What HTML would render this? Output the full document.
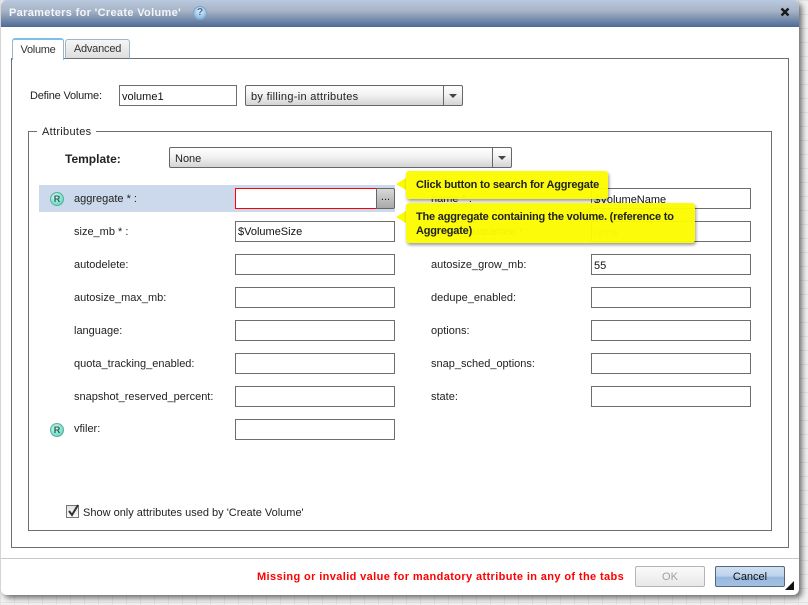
<!DOCTYPE html>
<html><head><meta charset="utf-8">
<style>
html,body{margin:0;padding:0}
body{width:808px;height:605px;overflow:hidden;position:relative;background-color:#f1f1f1;
background-image:linear-gradient(#e3e3e3 1px,transparent 1px),linear-gradient(90deg,#e3e3e3 1px,transparent 1px);background-size:14px 14px;
font-family:"Liberation Sans",sans-serif;font-size:11px;color:#222}
div{position:absolute;box-sizing:border-box}
.t{white-space:nowrap;line-height:14px;margin-top:1px}
.i{width:160px;height:21px;background:#fff;border:1px solid #6e6e6e;padding:4px 2px 0;line-height:14px;font-size:11px;color:#111;white-space:nowrap}
.sel{height:21px;border:1px solid #666;border-radius:2px;background:linear-gradient(#fff,#f2f2f2 45%,#d4d4d4);padding:4px 5px 0;line-height:14px;white-space:nowrap}
.ar{top:0;right:0;width:19px;height:19px;border-left:1px solid #666}
.ar:after{content:"";position:absolute;left:5px;top:8px;border:4px solid transparent;border-top:4px solid #444;border-bottom:0}
.r{width:14px;height:14px;border-radius:50%;background:radial-gradient(circle at 40% 35%,#d9fbf3,#6fdcc6 70%,#44b9a5);border:1px solid #5cae9f;color:#2a6158;font:bold 9px/12px "Liberation Sans",sans-serif;text-align:center}
.tip{background:rgba(251,251,0,.96);border-radius:3px;box-shadow:1px 2px 3px rgba(0,0,0,.4);font-weight:bold;color:#222;line-height:14px;padding:0 10px;letter-spacing:-.2px}
.tipa{width:0;height:0;border-style:solid;border-color:transparent #fbfb00 transparent transparent;border-width:6px 10px 6px 0}
</style></head><body>
<div style="left:1px;top:0;width:798px;height:595px;background:#fff;border-radius:6px;box-shadow:3px 3px 6px rgba(0,0,0,.55)"></div>
<div style="left:1px;top:0;width:798px;height:27px;border-radius:6px 6px 0 0;background:linear-gradient(#b9c9df,#a8b4c6 40%,#4c6a97)"></div>
<div class="t" style="left:9px;top:5px;color:#f2f5fa;font-weight:bold;font-size:11px;letter-spacing:.33px">Parameters for 'Create Volume'</div>
<div style="left:193px;top:6px;width:14px;height:14px;border-radius:50%;background:radial-gradient(circle at 50% 35%,#e8f2fb,#80b3de 80%);border:1px solid #7fa4c6;color:#3f6f9a;font:bold 10px/12px 'Liberation Sans',sans-serif;text-align:center">?</div>
<svg style="position:absolute;left:780px;top:7px" width="10" height="10"><path d="M1.5 1.5L8.5 8.5M8.5 1.5L1.5 8.5" stroke="#1a1a1a" stroke-width="2.4"/></svg>

<div style="left:11px;top:58px;width:778px;height:490px;border:1px solid #6e6e6e"></div>
<div style="left:65px;top:39px;width:65px;height:20px;background:linear-gradient(#f6f6f6,#dedede);border:1px solid #9fb6c9;border-bottom:1px solid #6e6e6e;border-radius:3px 3px 0 0;text-align:center;line-height:18px;color:#333;letter-spacing:-.2px">Advanced</div>
<div style="left:12px;top:38px;width:52px;height:22px;background:#fff;border:1px solid #9fb6c9;border-top:2px solid #7cc0e8;border-bottom:0;border-radius:3px 3px 0 0;text-align:center;line-height:21px;color:#333;letter-spacing:-.3px">Volume</div>

<div class="t" style="left:30px;top:88px;letter-spacing:-.2px">Define Volume:</div>
<div class="i" style="left:119px;top:85px;width:118px">volume1</div>
<div class="sel" style="left:245px;top:85px;width:218px;letter-spacing:.3px">by filling-in attributes<div class="ar"></div></div>

<div style="left:28px;top:131px;width:744px;height:400px;border:1px solid #6e6e6e"></div>
<div class="t" style="left:37px;top:124px;background:#fff;padding:0 5px;letter-spacing:.3px">Attributes</div>
<div class="t" style="left:65px;top:151px;font-weight:bold;font-size:12px">Template:</div>
<div class="sel" style="left:169px;top:147px;width:343px">None<div class="ar"></div></div>

<div style="left:39px;top:185px;width:356px;height:27px;background:#ccd9ec"></div>
<div class="r" style="left:50px;top:192px">R</div>
<div class="t" style="left:74px;top:191px">aggregate * :</div>
<div class="i" style="left:235px;top:188px;width:142px;height:21px;border:1px solid #f00"></div>
<div style="left:376px;top:188px;width:19px;height:21px;border:1px solid #666;border-radius:0 2px 2px 0;background:linear-gradient(#d8d8d8,#a9a9a9);text-align:center;line-height:17px;color:#222">...</div>

<div class="t" style="left:431px;top:191px">name * :</div>
<div class="i" style="left:591px;top:188px">$VolumeName</div>
<div class="t" style="left:74px;top:224px">size_mb * :</div>
<div class="i" style="left:235px;top:221px;padding-top:3px">$VolumeSize</div>
<div class="t" style="left:431px;top:224px">space_guarantee * :</div>
<div class="i" style="left:591px;top:221px;color:#888">none</div>

<div class="t" style="left:74px;top:257px">autodelete:</div><div class="i" style="left:235px;top:254px"></div>
<div class="t" style="left:431px;top:257px">autosize_grow_mb:</div><div class="i" style="left:591px;top:254px">55</div>
<div class="t" style="left:74px;top:290px">autosize_max_mb:</div><div class="i" style="left:235px;top:287px"></div>
<div class="t" style="left:431px;top:290px">dedupe_enabled:</div><div class="i" style="left:591px;top:287px"></div>
<div class="t" style="left:74px;top:323px">language:</div><div class="i" style="left:235px;top:320px"></div>
<div class="t" style="left:431px;top:323px">options:</div><div class="i" style="left:591px;top:320px"></div>
<div class="t" style="left:74px;top:356px">quota_tracking_enabled:</div><div class="i" style="left:235px;top:353px"></div>
<div class="t" style="left:431px;top:356px">snap_sched_options:</div><div class="i" style="left:591px;top:353px"></div>
<div class="t" style="left:74px;top:389px">snapshot_reserved_percent:</div><div class="i" style="left:235px;top:386px"></div>
<div class="t" style="left:431px;top:389px">state:</div><div class="i" style="left:591px;top:386px"></div>
<div class="r" style="left:50px;top:423px">R</div>
<div class="t" style="left:74px;top:421px">vfiler:</div><div class="i" style="left:235px;top:419px"></div>

<div class="tipa" style="left:396px;top:178px"></div>
<div class="tip" style="left:406px;top:171px;width:202px;height:28px;line-height:28px;white-space:nowrap">Click button to search for Aggregate</div>
<div class="tipa" style="left:396px;top:211px"></div>
<div class="tip" style="left:406px;top:203px;width:289px;height:40px;padding-top:7px">The aggregate containing the volume. (reference to Aggregate)</div>

<div style="left:66px;top:505px;width:13px;height:13px;border:1px solid #777;background:linear-gradient(#e2e2e2,#fbfbfb)"></div>
<svg style="position:absolute;left:66px;top:503px" width="15" height="15"><path d="M3 8L6 12L12 2" fill="none" stroke="#333" stroke-width="2"/></svg>
<div class="t" style="left:83px;top:505px">Show only attributes used by 'Create Volume'</div>

<div style="left:1px;top:558px;width:798px;height:1px;background:#c8c8c8"></div>
<div class="t" style="left:257px;top:569px;color:#f00;font-weight:bold;letter-spacing:.38px">Missing or invalid value for mandatory attribute in any of the tabs</div>
<div style="left:635px;top:566px;width:70px;height:21px;border:1px solid #b5b5b5;border-radius:2px;background:linear-gradient(#fafafa,#e8e8e8);color:#a0a0a0;text-align:center;line-height:20px">OK</div>
<div style="left:715px;top:566px;width:70px;height:21px;border:1px solid #59667a;border-radius:2px;background:linear-gradient(#cfe0f2,#bcd2ea 50%,#96b8de 52%,#a3c0e2);color:#111;text-align:center;line-height:20px">Cancel</div>
<svg style="position:absolute;left:785px;top:581px" width="10" height="10"><path d="M9 0V9H0Z" fill="#111"/></svg>
</body></html>
